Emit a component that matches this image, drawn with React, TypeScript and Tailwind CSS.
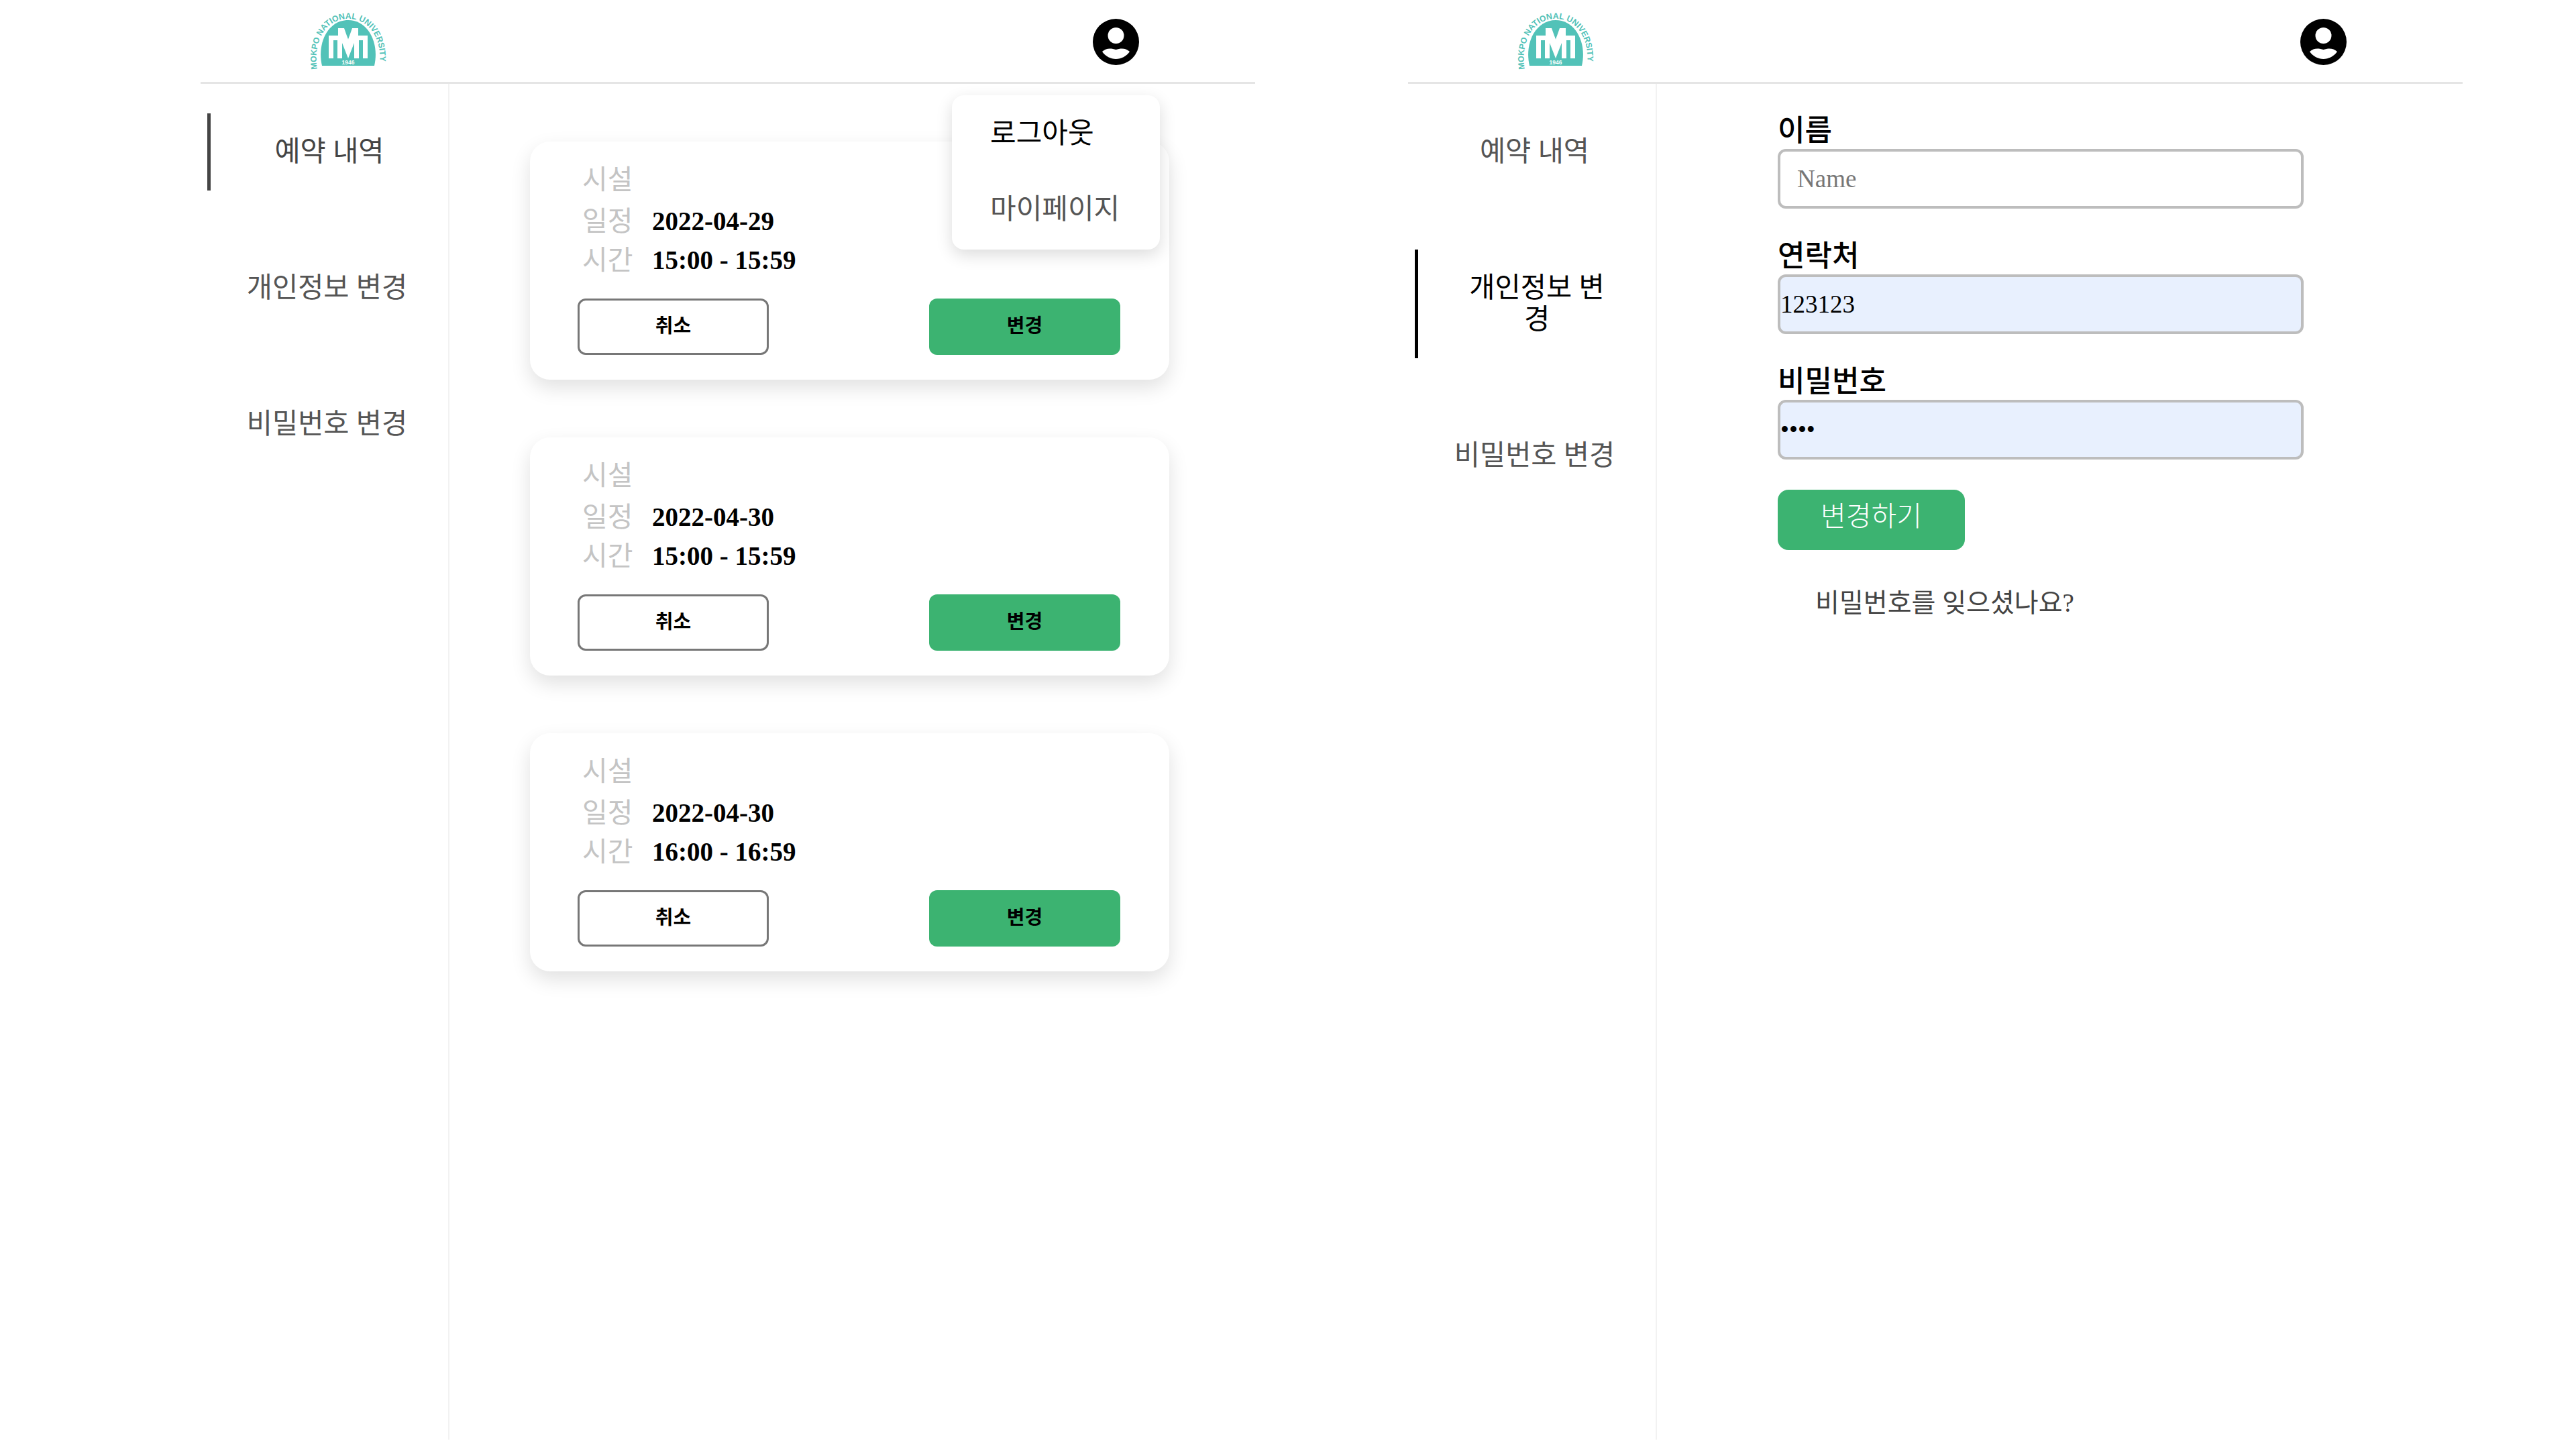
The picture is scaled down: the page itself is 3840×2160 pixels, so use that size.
const serif = "font-['Liberation_Serif','Noto_Sans_CJK_KR',serif]";

const reservations = [
  { date: "2022-04-29", time: "15:00 - 15:59" },
  { date: "2022-04-30", time: "15:00 - 15:59" },
  { date: "2022-04-30", time: "16:00 - 16:59" },
];

const Logo = () => (
  <svg width="118" height="88" viewBox="0 0 118 88" className="ml-[1px]">
    <defs>
      <path id="logo-arc" d="M13 86 C 6 44, 26 11, 59 11 C 92 11, 112 44, 105 86" fill="none" />
    </defs>
    <text fontFamily="Liberation Sans, sans-serif" fontWeight="700" fontSize="12.5" fill="#52c2b8">
      <textPath href="#logo-arc" textLength="190" lengthAdjust="spacingAndGlyphs">
        MOKPO NATIONAL UNIVERSITY
      </textPath>
    </text>
    <path d="M20 81 C 12 46, 30 13, 59 13 C 88 13, 106 46, 98 81 Z" fill="#52c2b8" />
    <path
      d="M30 36 H44 V25 H53 L59 42 L65 25 H74 V36 H88 V70 H81 V43 H75 V70 H68 V47 L59 70 L50 47 V70 H43 V43 H37 V70 H30 Z"
      fill="#fff"
    />
    <path d="M59 50 C 55 45, 55 40, 56 36 C 59 39, 59 44, 59 50 Z M59 50 C 63 45, 63 40, 62 36 C 59 39, 59 44, 59 50 Z" fill="#fff" />
    <text x="59" y="79" textAnchor="middle" fontFamily="Liberation Sans, sans-serif" fontWeight="700" fontSize="8.5" fill="#fff">
      1946
    </text>
  </svg>
);

const UserIcon = () => (
  <svg width="69" height="69" viewBox="0 0 69 69" className="mt-[2px]">
    <circle cx="34.5" cy="34.5" r="34.5" fill="#000" />
    <circle cx="34.5" cy="25" r="12" fill="#fff" />
    <path d="M14 49 C 20 43, 28 44, 34.5 46 C 41 44, 49 43, 55 49 C 50 56, 42 60, 34.5 60 C 27 60, 19 56, 14 49 Z" fill="#fff" />
  </svg>
);

const Header = () => (
  <header className="flex h-[125px] items-center justify-between border-b-[3px] border-[#e5e5e5] pl-[160px] pr-[173px]">
    <Logo />
    <UserIcon />
  </header>
);

const SideItem = ({ active, tone, children }: { active?: boolean; tone?: string; children: React.ReactNode }) => (
  <li
    className={
      active
        ? `ml-[10px] flex items-center justify-center border-l-[5px] py-[34px] text-center leading-[47px] ${tone}`
        : "flex items-center justify-center py-[34px] pl-[8px] text-center leading-[47px] text-[#555]"
    }
  >
    {children}
  </li>
);

const Sidebar = ({ active }: { active: number }) => (
  <nav className="w-[371px] shrink-0 border-r-[2px] border-[#f2f2f2] pt-[44px]">
    <ul className="flex flex-col gap-[88px] text-[41.5px]">
      <SideItem active={active === 0} tone="border-[#444] text-[#444]">
        예약 내역
      </SideItem>
      <SideItem active={active === 1} tone="border-black text-black">
        {active === 1 ? (
          <span>
            개인정보 변<br />경
          </span>
        ) : (
          "개인정보 변경"
        )}
      </SideItem>
      <SideItem>비밀번호 변경</SideItem>
    </ul>
  </nav>
);

const ReservationCard = ({ date, time }: { date: string; time: string }) => (
  <div className="h-[355px] w-[953px] rounded-[30px] bg-white pl-[71px] pr-[73px] pt-[28px] shadow-[0_12px_30px_rgba(0,0,0,0.12)]">
    <div className="text-[41px] leading-[58px] text-[#c4c4c4]">
      <div className="h-[62px] pl-[7px]">시설</div>
      <div className="flex h-[58px] items-center pl-[7px]">
        <span className="w-[104px]">일정</span>
        <b className="text-[39px] text-black">{date}</b>
      </div>
      <div className="flex h-[58px] items-center pl-[7px]">
        <span className="w-[104px]">시간</span>
        <b className="text-[39px] text-black">{time}</b>
      </div>
    </div>
    <div className="mt-[28px] flex justify-between">
      <button className="h-[84px] w-[285px] rounded-[12px] border-[3px] border-[#777] bg-white text-[29px] font-bold text-black">
        취소
      </button>
      <button className="h-[84px] w-[285px] rounded-[12px] bg-[#3cb371] text-[29px] font-bold text-black">
        변경
      </button>
    </div>
  </div>
);

const Field = ({ label, children }: { label: string; children: React.ReactNode }) => (
  <label className="block">
    <span className="block text-[44px] font-medium leading-[47px] text-black">{label}</span>
    {children}
  </label>
);

const inputClass =
  "mt-[3px] block h-[89px] w-[784px] rounded-[12px] border-[4px] border-[#bdbdbd] text-[37px] text-black outline-none";

const App = () => {
  return (
    <div className={`flex h-screen gap-[228px] bg-white pl-[299px] ${serif}`}>
      {/* reservations + open user menu */}
      <section className="relative flex h-[2146px] w-[1572px] flex-col">
        <Header />
        <div className="flex flex-1">
          <Sidebar active={0} />
          <main className="flex flex-col gap-[86px] pl-[120px] pt-[86px]">
            {reservations.map((r, i) => (
              <ReservationCard key={i} date={r.date} time={r.time} />
            ))}
          </main>
        </div>
        <div className="absolute left-[1120px] top-[142px] flex h-[230px] w-[310px] flex-col justify-center gap-[65px] rounded-[18px] bg-white pb-[4px] pl-[57px] text-[42px] leading-[48px] shadow-[0_8px_24px_rgba(0,0,0,0.14)]">
          <span className="text-black">로그아웃</span>
          <span className="text-[#555]">마이페이지</span>
        </div>
      </section>

      {/* profile edit */}
      <section className="flex h-[2146px] w-[1572px] flex-col">
        <Header />
        <div className="flex flex-1">
          <Sidebar active={1} />
          <main className="pl-[180px] pt-[47px]">
            <div className="flex flex-col gap-[48px]">
              <Field label="이름">
                <input className={`${inputClass} px-[25px] placeholder:text-[#777]`} placeholder="Name" />
              </Field>
              <Field label="연락처">
                <input className={`${inputClass} bg-[#e8f0fe]`} defaultValue="123123" />
              </Field>
              <Field label="비밀번호">
                <input className={`${inputClass} bg-[#e8f0fe]`} type="password" defaultValue="1234" />
              </Field>
            </div>
            <button className="mt-[45px] h-[90px] w-[279px] rounded-[16px] bg-[#3cb371] text-[41px] font-light text-white">
              <span className="relative bottom-[4px]">변경하기</span>
            </button>
            <p className="mt-[55px] pl-[56px] text-[39px] leading-[48px] text-[#444]">비밀번호를 잊으셨나요?</p>
          </main>
        </div>
      </section>
    </div>
  );
};

export default App;
